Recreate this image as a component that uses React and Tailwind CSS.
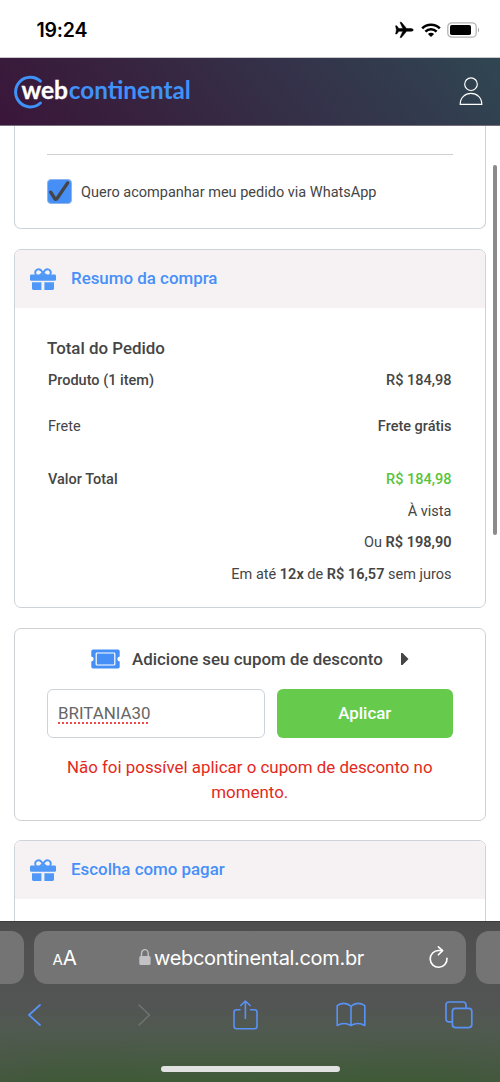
import React from "react";

function Gift() {
  return (
    <svg className="h-[23px] w-[26px] shrink-0" viewBox="0 0 26 23" fill="#4f98f8">
      <path d="M6.2 7.5C3.8 4.5 5.8 1.2 8.6 1.2C10.8 1.2 12 3.2 13 5C14 3.2 15.2 1.2 17.4 1.2C20.2 1.2 22.2 4.5 19.8 7.5M9.8 7.5L13 4.6L16.2 7.5" fill="none" stroke="#4f98f8" strokeWidth="2" />
      <rect x="0" y="6.6" width="26" height="6.2" rx="1.4" />
      <path d="M2 14.2H11.4V22H3.4Q2 22 2 20.6Z" />
      <path d="M14.4 14.2H24V20.6Q24 22 22.6 22H14.4Z" />
    </svg>
  );
}

function Row({ label, value, className }) {
  return (
    <div className={"flex items-center justify-between leading-[20px] " + className}>
      <span>{label}</span>
      {value}
    </div>
  );
}

function SectionHead({ title }) {
  return (
    <div className="flex h-[58px] items-center bg-[#f6f2f3] pl-[14.5px]">
      <Gift />
      <h2 className="ml-[15.5px] text-[16.9px] font-medium text-[#4690f8]">{title}</h2>
    </div>
  );
}

function StatusBar() {
  return (
    <div className="flex h-[57px] items-center justify-between bg-white pl-[36.5px] pr-[20px] pt-[3px]">
      <span className="pt-[2px] font-['Inter'] text-[19.5px] font-semibold tracking-[-0.2px] text-black">19:24</span>
      <div className="flex items-center">
        <svg className="h-[18px] w-[19px]" viewBox="0 0 19 18">
          <path d="M0.6 4.8H1.8L3.8 7.5H7.8L5 1.2H6.4L11.6 7.5H16Q18.2 7.6 18.3 8.9Q18.2 10.2 16 10.3H11.6L6.4 16.6H5L7.8 10.3H3.8L1.8 13H0.6L1.4 8.9Z" stroke="#000" strokeWidth="0.5" strokeLinejoin="round" />
        </svg>
        <svg className="ml-[7px] h-[15px] w-[20px]" viewBox="0 0 20 15" fill="none" stroke="#000">
          <path d="M1.2 5.4A12.4 12.4 0 0 1 18.8 5.4" strokeWidth="2.6" />
          <path d="M4.4 8.7A7.8 7.8 0 0 1 15.6 8.7" strokeWidth="2.5" />
          <path d="M10 14L6.9 11Q10 8.5 13.1 11Z" fill="#000" stroke="none" />
        </svg>
        <svg className="ml-[6px] h-[16px] w-[33px]" viewBox="0 0 33 16">
          <rect x="0.8" y="0.8" width="28.4" height="14.4" rx="4" fill="none" stroke="#b4b4b4" strokeWidth="1.3" />
          <rect x="3" y="3" width="21" height="10" rx="1.8" />
          <path d="M31 5.5Q33 8 31 10.5Z" fill="#999" />
        </svg>
      </div>
    </div>
  );
}

function Header() {
  return (
    <header className="flex h-[69px] items-center justify-between border-b border-t border-b-[#77707c] border-t-[#c9c9cc] bg-[linear-gradient(50deg,#3a163a_0%,#37233f_30%,#34324a_60%,#304652_100%)] pl-[14px] pr-[17px]">
      <svg className="h-[36px] w-[180px]" viewBox="0 0 180 36">
        <path d="M26.4 7.2A14.8 14.8 0 1 0 26.4 29" fill="none" stroke="#3f92fa" strokeWidth="3" strokeLinecap="round" />
        <text x="7.5" y="24.6" textLength="46.5" lengthAdjust="spacingAndGlyphs" fontFamily="Lato, sans-serif" fontWeight="700" fontSize="24" fill="#fff" stroke="#fff" strokeWidth="0.3">web</text>
        <text x="54.8" y="24.6" textLength="122" lengthAdjust="spacingAndGlyphs" fontFamily="Lato, sans-serif" fontWeight="700" fontSize="24" fill="#3f92fa">continental</text>
      </svg>
      <svg className="h-[30px] w-[24px]" viewBox="0 0 24 30" fill="none" stroke="#fff" strokeWidth="1.2">
        <circle cx="12" cy="7.2" r="6.3" />
        <path d="M1.2 27.4C1.2 20.5 6 16.4 12 16.4S22.8 20.5 22.8 27.4Z" />
      </svg>
    </header>
  );
}

function BrowserBar() {
  return (
    <footer className="h-[161px] shrink-0 border-t border-[#3d3d3d] bg-[linear-gradient(180deg,#4d4d4d_0%,#515151_18%,#535454_50%,#505a50_68%,transparent_100%),radial-gradient(ellipse_at_50%_100%,#3f5c38_0%,#3f5937_55%,#4a5548_100%)] font-['Inter']">
      <div className="flex h-[63px] justify-between pt-[9px]">
        <div className="h-[53px] w-[24px] rounded-r-[13px] bg-[#747474]" />
        <div className="flex h-[53px] w-[432px] items-center rounded-[13px] bg-[#747474] pl-[18.5px] pr-[17px] text-white">
          <span className="flex w-[26px] items-baseline pt-[2px]"><span className="text-[15px]">A</span><span className="text-[20.5px]">A</span></span>
          <svg className="ml-[60.5px] h-[17px] w-[12px]" viewBox="0 0 12 17">
            <path d="M2.5 8V4.5A3.3 3.8 0 0 1 9.2 4.5V8" fill="none" stroke="#c2c1c6" strokeWidth="1.4" />
            <rect x="0.3" y="7" width="11.3" height="9" rx="1.6" fill="#c2c1c6" />
          </svg>
          <span className="ml-[3px] whitespace-nowrap text-[20px] tracking-[-0.32px]">webcontinental.com.br</span>
          <svg className="ml-auto h-[24px] w-[20px]" viewBox="0 0 20 24" fill="none" stroke="#fff" strokeWidth="1.6" strokeLinecap="round" strokeLinejoin="round">
            <path d="M13 4.5H9.6A8.4 8.4 0 1 0 18 12.3" />
            <path d="M9.4 0.9L13.6 4.6L9.4 8.8" />
          </svg>
        </div>
        <div className="h-[53px] w-[24px] rounded-l-[13px] bg-[#747474]" />
      </div>
      <div className="flex h-[59px] items-center justify-between pl-[27px] pr-[27px]">
        <svg className="h-[24px] w-[15px]" viewBox="0 0 15 24" fill="none" stroke="#5992f5" strokeWidth="1.8" strokeLinecap="round" strokeLinejoin="round"><path d="M13 2L2 12L13 22" /></svg>
        <svg className="ml-[16px] h-[24px] w-[15px]" viewBox="0 0 15 24" fill="none" stroke="#707271" strokeWidth="1.6" strokeLinecap="round" strokeLinejoin="round"><path d="M2 2L12.5 12L2 22" /></svg>
        <svg className="ml-[1px] h-[30px] w-[26px]" viewBox="0 0 26 30" fill="none" stroke="#5992f5" strokeWidth="1.6" strokeLinecap="round" strokeLinejoin="round"><path d="M8 9.8H4.5Q2 9.8 2 12.3V26.2Q2 28.7 4.5 28.7H22.5Q25 28.7 25 26.2V12.3Q25 9.8 22.5 9.8H18.5M13.4 18.5V1M8.7 5.5L13.4 1L18.1 5.5" /></svg>
        <svg className="h-[25px] w-[30px]" viewBox="0 0 30 25" fill="none" stroke="#5992f5" strokeWidth="1.6" strokeLinejoin="round"><path d="M15 4.2Q8.5 -1.2 1.2 3.6V23.5Q8 19.5 15 23.5Q22 19.5 28.8 23.5V3.6Q21.5 -1.2 15 4.2V23.5" /></svg>
        <svg className="h-[28px] w-[28px]" viewBox="0 0 28 28" fill="none" stroke="#5992f5" strokeWidth="1.7"><path d="M7 20.8H4Q1 20.8 1 17.8V4Q1 1 4 1H18Q21 1 21 4V7" /><rect x="7.4" y="7.4" width="19.4" height="19.2" rx="3" /></svg>
      </div>
      <div className="flex justify-center pt-[22px]"><div className="h-[6px] w-[179px] rounded-full bg-[#e2e2e2]" /></div>
    </footer>
  );
}

export default function App() {
  return (
    <div className="flex h-[1082px] w-[500px] flex-col overflow-hidden bg-white font-['Roboto'] text-[14.5px] text-[#454545]">
      <StatusBar />
      <Header />
      <main className="relative h-[795px] overflow-hidden bg-white pl-[14px] pr-[14.5px]">
        <section className="h-[103px] rounded-b-[7px] border-x border-b border-[#ced3d8] px-[32px] pt-[28px]">
          <div className="border-t-[1.5px] border-[#ced1d4]" />
          <label className="mt-[24px] flex h-[25px] items-center">
            <span className="flex h-[25px] w-[25px] items-center justify-center rounded-[4px] border border-[#8fb4ee] bg-[#458ff7]">
              <svg className="h-[24px] w-[24px]" viewBox="0 0 24 24" fill="none" stroke="#454545" strokeWidth="3.5" strokeLinecap="round" strokeLinejoin="round"><path d="M2.8 12.2L7 18.8Q8.5 20.5 9.8 18.2L20.5 2.5" /></svg>
            </span>
            <span className="ml-[9px] pt-[2px]">Quero acompanhar meu pedido via WhatsApp</span>
          </label>
        </section>

        <section className="mt-[20px] h-[359px] overflow-hidden rounded-[7px] border border-[#ced3d8]">
          <SectionHead title="Resumo da compra" />
          <div className="px-[33px] pt-[30px]">
            <h3 className="-ml-px text-[16.9px] font-medium leading-[21px]">Total do Pedido</h3>
            <Row className="mt-[12px] font-medium" label="Produto (1 item)" value={<b className="font-medium">R$ 184,98</b>} />
            <Row className="mt-[26px]" label="Frete" value={<b className="font-medium">Frete grátis</b>} />
            <Row className="mt-[33px] font-medium" label="Valor Total" value={<b className="font-medium text-[#58c43d]">R$ 184,98</b>} />
            <div className="mt-[6px] text-right leading-[31.4px]">
              <p>À vista</p>
              <p>Ou <b className="font-semibold">R$ 198,90</b></p>
              <p>Em até <b className="font-semibold">12x</b> de <b className="font-semibold">R$ 16,57</b> sem juros</p>
            </div>
          </div>
        </section>

        <section className="mt-[20px] h-[193px] rounded-[7px] border border-[#ced1d4] px-[32px]">
          <div className="flex h-[60px] items-center pl-[44px]">
            <svg className="h-[20px] w-[29px]" viewBox="0 0 29 20">
              <path d="M2 0.5H27Q28.7 0.5 28.7 2.2V7.4Q26.3 7.8 26.3 10T28.7 12.6V17.8Q28.7 19.5 27 19.5H2Q0.3 19.5 0.3 17.8V12.6Q2.7 12.2 2.7 10T0.3 7.4V2.2Q0.3 0.5 2 0.5Z" fill="#458ff7" />
              <rect x="5.2" y="4" width="18.6" height="12" rx="0.8" fill="none" stroke="#fff" strokeWidth="1.2" />
            </svg>
            <span className="ml-[12px] whitespace-nowrap pt-px text-[16.9px] font-medium">Adicione seu cupom de desconto</span>
            <svg className="ml-[18px] h-[12px] w-[8px]" viewBox="0 0 8 12" fill="#454545"><path d="M0 0H1.5L7.5 6L1.5 12H0Z" /></svg>
          </div>
          <div className="flex gap-[12px]">
            <div className="flex h-[49px] w-[218px] items-center rounded-[6px] border border-[#ced3d8] pl-[10px] text-[16.9px] text-[#666]">
              <span className="underline decoration-[#f04a42] decoration-dotted decoration-[2px] underline-offset-[4px] [text-decoration-skip-ink:none]">BRITANIA30</span>
            </div>
            <button className="h-[49px] flex-1 rounded-[6px] bg-[#66cb4d] text-[16.9px] font-medium text-white">Aplicar</button>
          </div>
          <p className="mt-[17px] text-center text-[16.9px] leading-[25px] text-[#e42920]">Não foi possível aplicar o cupom de desconto no<br />momento.</p>
        </section>

        <section className="mt-[19px] h-[120px] overflow-hidden rounded-[7px] border border-[#ced3d8]">
          <SectionHead title="Escolha como pagar" />
        </section>
        <div className="absolute right-[3px] top-[39px] h-[370px] w-[4px] rounded-full bg-[#8b8b8b]" />
      </main>
      <BrowserBar />
    </div>
  );
}
